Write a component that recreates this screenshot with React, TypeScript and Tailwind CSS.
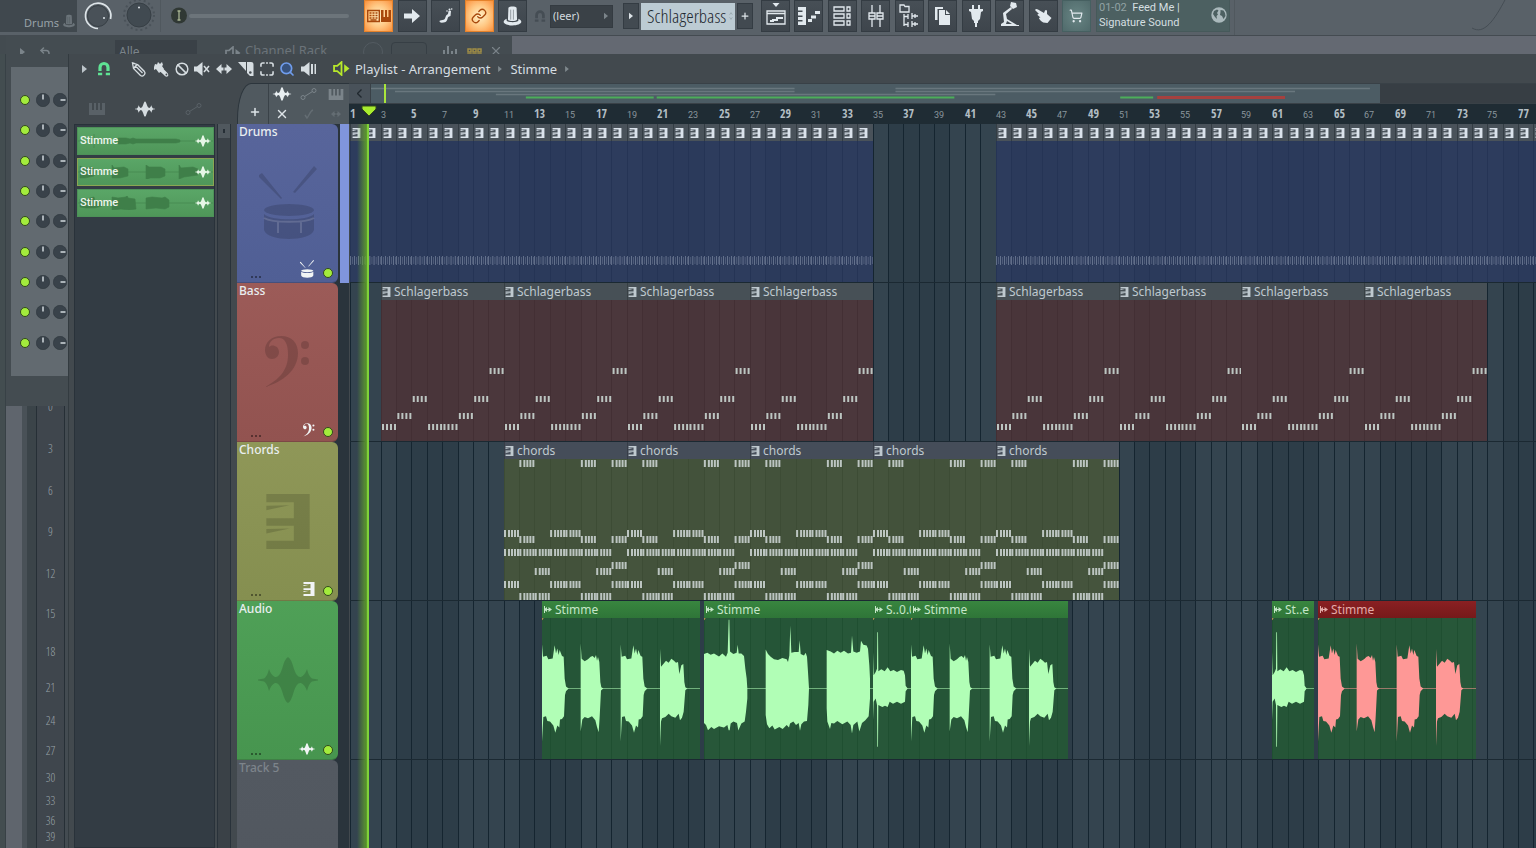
import type { ReactNode } from "react";
import { ShoppingCart, Link, Ban, Search, Undo2, Plus, X } from "lucide-react";
import clsx from "clsx";

const BAR = 15.37;
const TOTAL_BARS = 130;

const barX = (bar: number) => Math.round((bar - 1) * BAR);
const range = (from: number, to: number) =>
  Array.from({ length: to - from }, (_, i) => from + i);

/* ---------- icons ---------- */

type IconProps = { className?: string };

const KeysIcon = ({ className }: IconProps) => (
  <svg viewBox="0 0 26 33" className={className} fill="currentColor">
    <path d="M0 0h26v33H0v-5h16.500V19H0v-4.500h16.500V5H0z" />
    <path d="M0 7l14-.3L0 9.700zM0 21l14-.3L0 23.700z" />
  </svg>
);

const WaveIcon = ({ className }: IconProps) => (
  <svg viewBox="0 0 60 46" className={className} fill="currentColor">
    <path d="M0 22.500L6 21.500Q9 20 11 12Q13 18 17 20Q21 21 24 12Q27 1 30 0Q33 1 36 12Q39 21 43 20Q47 18 49 12Q51 20 54 21.500L60 22.500V23.500L54 24.500Q51 26 49 34Q47 28 43 26Q39 25 36 34Q33 45 30 46Q27 45 24 34Q21 25 17 26Q13 28 11 34Q9 26 6 24.500L0 23.500z" />
  </svg>
);

const DrumIcon = ({ className }: IconProps) => (
  <svg viewBox="0 0 60 74" className={className} fill="currentColor">
    <path d="M1 9l3-2 20 25-1 1L1 11zM56 0l3 3-22 24-2-1z" />
    <ellipse cx="31" cy="44" rx="25" ry="6" />
    <path d="M6 48c6 7 44 7 50 0v16c-3 12-47 12-50 0z" />
    <path
      d="M20 55v12M43 55v12M6 52c8 5 42 5 50 0"
      stroke="#fff"
      strokeOpacity=".15"
      strokeWidth="2"
      fill="none"
    />
  </svg>
);

const BassClefIcon = ({ className }: IconProps) => (
  <svg viewBox="0 0 46 52" className={className} fill="currentColor">
    <path d="M0 51c13-7 23-16 23-32C23 8 20 2 14 2 8 2 4 6 4 11c2-3 10-2 10 5 0 4-3 7-7 7-5 0-7-5-7-9C0 6 7 0 16 0c11 0 17 7 17 17C33 34 18 46 0 51z" />
    <circle cx="40" cy="9" r="4" />
    <circle cx="40" cy="25" r="4" />
  </svg>
);

const KeyboardIcon = ({ className }: IconProps) => (
  <svg viewBox="0 0 16 12" className={className} fill="currentColor">
    <path d="M0 0h3v7h2V0h2v7h2V0h2v7h2V0h3v12H0z" />
  </svg>
);

const AutomationIcon = ({ className }: IconProps) => (
  <svg viewBox="0 0 17 13" className={className} fill="none" stroke="currentColor">
    <circle cx="3" cy="10" r="2" />
    <circle cx="14" cy="3" r="2" />
    <path d="M4.500 9l8-5" />
  </svg>
);

const TriRight = ({ className }: IconProps) => (
  <svg viewBox="0 0 5 8" className={className} fill="currentColor">
    <path d="M0 0l5 4-5 4z" />
  </svg>
);

const MagnetIcon = ({ className }: IconProps) => (
  <svg viewBox="0 0 14 15" className={className} fill="none" stroke="currentColor">
    <path d="M3 10V6.500a4 4 0 0 1 8 0V10" strokeWidth="3.200" />
    <path d="M1 13h4.200M8.800 13H13" strokeWidth="2.600" />
  </svg>
);

const PencilIcon = () => (
  <svg viewBox="0 0 16 16" className="size-4" fill="none" stroke="currentColor" strokeWidth="1.300">
    <path d="M1.500 2L2.500 7.500l7 7c1 .8 2.500.6 3.500-.4s1.200-2.500.4-3.500l-7-7zM4.500 5l7 7M6.500 3.500l7 7M2.500 7.500l2-2.500 2-1.500M1.500 2l2 .5" />
  </svg>
);

const BrushIcon = () => (
  <svg viewBox="0 0 16 16" className="size-4" fill="currentColor">
    <path d="M1 6l1-3 2 .5L5 1l2 2 2-2 1 3-1 1 2 3-5 4-3-4-2 1z" />
    <path d="M9 6.500l4.500 4.500c2 1.500 2.500 4 1 4.500s-3-.5-4-2L6.500 10z" />
    <circle cx="13.400" cy="13.500" r=".9" fill="#42494e" />
  </svg>
);

const MuteIcon = () => (
  <svg viewBox="0 0 16 14" className="h-3.5 w-4" fill="currentColor">
    <path d="M0 4.500h3L8.500 0v14L3 9.500H0z" />
    <path d="M10 4l5 6M15 4l-5 6" stroke="currentColor" strokeWidth="1.500" />
  </svg>
);

const SlipIcon = ({ className }: IconProps) => (
  <svg viewBox="0 0 16 12" className={className} fill="currentColor">
    <path d="M0 6l5.500-5v3.500h5V1L16 6l-5.500 5V7.500h-5V11z" />
    <path d="M8 3v6" stroke="#42494e" />
  </svg>
);

const SliceIcon = () => (
  <svg viewBox="0 0 16 16" className="size-4" fill="currentColor">
    <path d="M0 1h8v9z" />
    <path d="M9 1h4c2 0 2.500 1 2.500 3v11H12L9 12z" />
    <circle cx="12.300" cy="11.500" r="1.300" fill="#42494e" />
  </svg>
);

const SelectIcon = () => (
  <svg viewBox="0 0 15 15" className="size-3.5" fill="none" stroke="currentColor" strokeWidth="1.700">
    <path d="M1 5V3q0-2 2-2h2M10 1h2q2 0 2 2v2M14 10v2q0 2-2 2h-2M5 14H3q-2 0-2-2v-2M6.500 1h2M6.500 14h2" />
  </svg>
);

const PlaybackIcon = () => (
  <svg viewBox="0 0 16 14" className="h-3.5 w-4" fill="currentColor">
    <path d="M0 4.500h3L8.500 0v14L3 9.500H0zM10 2h2v10h-2zM13.500 2h1.500v10h-1.500z" />
  </svg>
);

const SpeakerOutline = ({ className }: IconProps) => (
  <svg viewBox="0 0 16 14" className={className} fill="none" stroke="currentColor" strokeWidth="1.700">
    <path d="M1 4.500h3L8 1v12L4 9.500H1z" />
    <path d="M10.500 3L15.500 7l-5 4z" fill="currentColor" stroke="none" />
  </svg>
);

const HatIcon = ({ className }: IconProps) => (
  <svg viewBox="0 0 20 22" className={className} fill="currentColor">
    <path d="M5.500 2c1-2 8-2 9 0l.5 13c-1 2-9 2-10 0z" />
    <path d="M3.500 14C-4 18 3 21.500 10 21.500S24 18 16.500 14v2c-1 2.500-12 2.500-13 0z" />
    <path d="M8 4v11M11 4v11" stroke="#3c444b" strokeOpacity=".5" />
  </svg>
);

/* ---------- top toolbar ---------- */

const ToolButton = ({
  label,
  children,
  tone = "dark",
}: {
  label: string;
  children: ReactNode;
  tone?: "dark" | "orange" | "teal";
}) => (
  <button
    aria-label={label}
    className={clsx(
      "flex h-8 w-[29px] shrink-0 items-center justify-center border",
      tone === "dark" && "border-[#343c43] bg-linear-to-b from-[#474f56] to-[#3e454c] text-[#e2e9ee]",
      tone === "orange" &&
        "border-[#e5822b] bg-radial from-[#fff0c8] via-[#ffc985] to-[#fa9038] text-[#a8480c]",
      tone === "teal" && "border-[#466061] bg-radial from-[#688584] to-[#506a6b] text-[#e2e9ee]",
    )}
  >
    {children}
  </button>
);

const LEFT_TOOLS: { label: string; tone?: "dark" | "orange"; icon: ReactNode }[] = [
  {
    label: "Typing keyboard",
    tone: "orange",
    icon: (
      <svg viewBox="0 0 24 14" className="h-3.5 w-6" fill="none" stroke="currentColor">
        <path d="M.7 1.500h11.600v11H.7z" strokeWidth="1.400" />
        <path
          d="M2.500 4h2M5.500 4h2M8.500 4h2M2.500 6.500h2M5.500 6.500h2M8.500 6.500h2M2.500 9h2M5.500 9h2M8.500 9h2M3.500 11h6"
          strokeWidth="1.400"
        />
        <path d="M14 1h2.500v7H18V1h2v7h1.500V1H24v12H14z" fill="currentColor" stroke="none" />
      </svg>
    ),
  },
  {
    label: "Step edit",
    icon: (
      <svg viewBox="0 0 16 14" className="h-3.5 w-4" fill="currentColor">
        <path d="M0 4.500h8V0l8 7-8 7V9.500H0z" />
      </svg>
    ),
  },
  {
    label: "Note glide",
    icon: (
      <svg viewBox="0 0 16 16" className="size-4" fill="currentColor">
        <path d="M10.500 3q1-1 2.500 0l-.5 5q-3 .5-3 3-1 3.500-4 3.500-4 .5-4-1t3-1.500q2.500 0 3-3 .5-2 2.500-3z" />
        <circle cx="11.500" cy="1.500" r="1" />
        <circle cx="13.700" cy="1" r=".8" />
        <circle cx="9" cy="3" r=".8" />
      </svg>
    ),
  },
  { label: "Link", tone: "orange", icon: <Link className="size-4" strokeWidth={2} /> },
  { label: "Metronome hat", icon: <HatIcon className="h-5 w-[19px]" /> },
];

const RIGHT_TOOLS: { label: string; tone?: "dark" | "teal"; icon: ReactNode }[] = [
  {
    label: "View playlist",
    icon: (
      <svg viewBox="0 0 20 24" className="mb-1 h-6 w-5" fill="none" stroke="currentColor" strokeWidth="1.300">
        <path d="M1 9h18v13H1zM1 11.500h18" />
        <path d="M4 19h3v-1h4v-2h6" strokeWidth="2" />
        <path d="M6.500 1h7L10 5z" fill="currentColor" stroke="none" />
      </svg>
    ),
  },
  {
    label: "View piano roll",
    icon: (
      <svg viewBox="0 0 22 18" className="h-[18px] w-[22px]" fill="currentColor">
        <path d="M0 0h8v18H0v-3.500h4.500V13H0v-3h4.500V8.500H0V5h4.500V3.500H0z" />
        <path d="M10 12h4v3h-4zM13 8.500h5v3h-5zM17 4h5v3h-5z" />
      </svg>
    ),
  },
  {
    label: "View channel rack",
    icon: (
      <svg viewBox="0 0 18 20" className="h-5 w-[18px]" fill="none" stroke="currentColor" strokeWidth="1.300">
        <path d="M1 1h10v4H1zM1 8h10v4H1zM1 15h10v4H1zM14 1h3v4h-3zM14 8h3v4h-3zM14 15h3v4h-3z" />
      </svg>
    ),
  },
  {
    label: "View mixer",
    icon: (
      <svg viewBox="0 0 16 22" className="h-[22px] w-4" fill="none" stroke="currentColor" strokeWidth="1.300">
        <path d="M4 0v8M4 14v8M12 0v8M12 14v8M1 8h6v6H1zM9 8h6v6H9zM1 11h6M9 11h6" />
      </svg>
    ),
  },
  {
    label: "View browser",
    icon: (
      <svg viewBox="0 0 20 24" className="h-6 w-5" fill="none" stroke="currentColor" strokeWidth="1.300">
        <path d="M1 1h4l1 1.500h4V8H1zM5 10v12M5 12.500h4M5 20.500h4M13 9v6M13 17v6M13 12h6M13 20h6" />
        <path d="M9 10v5M9 18v5M16 10v4M16 18v4" />
      </svg>
    ),
  },
  {
    label: "Project files",
    icon: (
      <svg viewBox="0 0 15 18" className="h-[18px] w-[15px]" fill="currentColor">
        <path d="M0 0h8v2H2.500v11H0z" />
        <path d="M4 3h6v5h5v10H4zM11 3l4 4h-4z" />
      </svg>
    ),
  },
  {
    label: "Plugins",
    icon: (
      <svg viewBox="0 0 14 22" className="h-[22px] w-3.5" fill="currentColor">
        <path d="M3 0h2v4H3zM9 0h2v4H9zM0 4h14v2l-2 1-1 7-2 2v2H8v4H6v-4H5v-2l-2-2-1-7-2-1z" />
      </svg>
    ),
  },
  {
    label: "Touch controller",
    icon: (
      <svg viewBox="0 0 18 24" className="mb-1 h-6 w-[18px]" fill="currentColor">
        <path d="M10 0l5 1 1 4-4 2-3-3zM10 5l1 2-6 5 1 5 10 6h2v1H0v-2l3-2-1-9z" />
        <path d="M6 19l5 3H5z" fill="#434b52" />
      </svg>
    ),
  },
  {
    label: "Multi-touch",
    icon: (
      <svg viewBox="0 0 17 14" className="h-3.5 w-[17px]" fill="currentColor">
        <path d="M0 1q1-1.500 3-.5l6 3.500 1-2.500q1.500-1 2 .5v3l4.500 4-4 5q-5 0-7-2.500L4 9.500q0-1.500 1.500-1L2.500 6q0-1.500 1.500-1z" />
      </svg>
    ),
  },
  { label: "Shop", tone: "teal", icon: <ShoppingCart className="size-3.5" strokeWidth={2} /> },
];

const Toolbar = () => (
  <header className="flex h-9 shrink-0 items-start border-b border-[#444b51] bg-[#596168]">
    <div className="flex h-8 w-[77px] shrink-0 items-end justify-end gap-1 bg-[#40484e] pr-0.5 pb-px">
      <span className="font-['Noto_Sans',sans-serif] text-[11px] leading-4 text-[#98a2a8]">Drums</span>
      <HatIcon className="mb-0.5 h-4 w-3 text-[#6b747a]" />
    </div>
    <div className="flex w-[83px] shrink-0 justify-around">
      <button aria-label="Main volume" className="size-8">
        <svg viewBox="0 0 32 32">
          <circle cx="16" cy="16" r="10.500" fill="#495158" stroke="#373f45" />
          <path d="M16 28.500A12.700 12.700 0 1 1 28.500 19" fill="none" stroke="#dde4e8" strokeWidth="1.700" />
          <circle cx="22" cy="18" r="1" fill="#dde4e8" />
        </svg>
      </button>
      <button aria-label="Main pitch" className="size-8">
        <svg viewBox="0 0 32 32">
          <circle cx="16" cy="15" r="15" fill="none" stroke="#4a5259" strokeWidth="2" strokeDasharray="2 3" />
          <circle cx="16" cy="15" r="12" fill="#414a51" stroke="#373f45" />
          <circle cx="16" cy="7.500" r="1" fill="#dde4e8" />
        </svg>
      </button>
    </div>
    <div className="flex h-8 w-[204px] shrink-0 items-center border-l border-[#50585e] pl-2.5">
      <svg viewBox="0 0 16 18" className="h-[18px] w-4">
        <circle cx="8" cy="8.500" r="8" fill="#303834" />
        <path d="M6.500 4h3M8 4v9M6.500 13h3" stroke="#a8b493" strokeWidth="1.300" />
      </svg>
      <div className="ml-0.5 h-1 w-[160px] rounded-sm bg-[#6c747a]" />
    </div>
    <div className="flex w-[163px] shrink-0 justify-between">
      {LEFT_TOOLS.map((tool) => (
        <ToolButton key={tool.label} label={tool.label} tone={tool.tone}>
          {tool.icon}
        </ToolButton>
      ))}
    </div>
    <div className="flex h-8 shrink-0 items-center">
      <MagnetIcon className="ml-[7px] mr-1 h-3.5 w-3 text-[#454d54]" />
      <div className="flex h-[23px] w-[63px] items-center justify-between border border-[#343b41] bg-[#3a4147] pr-1 pl-0.5">
        <select
          aria-label="Snap"
          className="w-12 appearance-none bg-transparent font-['Noto_Sans',sans-serif] text-[11px] leading-4 text-[#d3dade]"
        >
          <option>(leer)</option>
        </select>
        <TriRight className="h-2 w-1 text-[#7b848a]" />
      </div>
      <button
        aria-label="Pattern menu"
        className="ml-2.5 flex h-[26px] w-4 items-center justify-center border border-[#343c43] bg-[#424a51] text-[#dde4e8]"
      >
        <TriRight className="h-2 w-1" />
      </button>
      <div className="ml-0.5 flex h-[27px] w-[94px] items-center justify-between bg-[#bccbd3] pr-0.5 pl-1.5">
        <select
          aria-label="Pattern"
          className="w-[82px] appearance-none bg-transparent font-['Open_Sans_Condensed_Light','Open_Sans_Condensed',Roboto,sans-serif] text-[19px] leading-[26px] font-light text-[#1d282f]"
        >
          <option>Schlagerbass</option>
        </select>
        <svg viewBox="0 0 6 12" className="h-3 w-1 shrink-0" fill="none" stroke="#8d9ba3">
          <path d="M1 4l2-3 2 3M1 8l2 3 2-3" />
        </svg>
      </div>
      <button
        aria-label="Add pattern"
        className="ml-0.5 flex h-[26px] w-4 items-center justify-center border border-[#343c43] bg-[#424a51] text-[#dde4e8]"
      >
        <Plus className="size-2.5" strokeWidth={3} />
      </button>
    </div>
    <div className="ml-2 flex w-[330px] shrink-0 justify-between">
      {RIGHT_TOOLS.map((tool) => (
        <ToolButton key={tool.label} label={tool.label} tone={tool.tone}>
          {tool.icon}
        </ToolButton>
      ))}
    </div>
    <div className="ml-[5px] flex h-8 w-[134px] shrink-0 items-center justify-between border border-t-0 border-[#46595a] bg-[#4c6061] pr-0.5 pb-0.5 pl-0.5">
      <p className="font-[Roboto,sans-serif] text-[11px] leading-[15px] text-[#d5dfe0]">
        <span className="text-[#91a2a3]">01-02</span> &nbsp;Feed Me |
        <br />
        Signature Sound
      </p>
      <svg viewBox="0 0 16 16" className="size-4">
        <circle cx="8" cy="8" r="7.700" fill="#aab9bc" />
        <path
          d="M3 4l3-1.500 1.500 1L6 6l1 1.500L5.500 9 6 12l-2-2-2-3zM9.500 3l3 .5L14 6l.5 3-2 3-1.500-3-2-1 .5-3z"
          fill="#4c6061"
        />
      </svg>
    </div>
    <div className="ml-1 flex h-full min-w-0 flex-1 justify-end border-l border-[#50585e] pr-6">
      <svg viewBox="0 0 40 32" className="h-8 w-10 shrink-0" fill="none" stroke="#454d54">
        <path d="M0 28c12 7 22-7 34-30" />
      </svg>
    </div>
  </header>
);

/* ---------- windows behind the playlist ---------- */

const ChannelRackTitle = () => (
  <div className="flex h-[18px] shrink-0 bg-[#646972]">
    <div className="flex w-[512px] shrink-0 items-start overflow-hidden border-l-[6px] border-[#434b50] bg-[#444c51] pt-1 text-[#7b848a]">
      <TriRight className="mt-2 ml-[14px] h-2 w-[5px] shrink-0" />
      <Undo2 className="mt-1.5 ml-3.5 size-3 shrink-0" strokeWidth={3} />
      <select
        aria-label="Channel filter"
        className="ml-[64px] h-6 w-[82px] shrink-0 appearance-none bg-[#3a4147] px-1 font-['Noto_Sans',sans-serif] text-xs text-[#7b848a]"
      >
        <option>Alle</option>
      </select>
      <SpeakerOutline className="mt-1.5 ml-7 h-3.5 w-4 shrink-0" />
      <span className="ml-1 font-['Noto_Sans',sans-serif] text-[13px] leading-5 whitespace-nowrap text-[#6b7379]">
        Channel Rack
      </span>
      <div className="mt-0.5 ml-9 size-5 shrink-0 rounded-full border border-[#535b61]" />
      <div className="mt-0.5 ml-2 h-5 w-9 shrink-0 rounded-sm border border-[#373f45]" />
      <svg viewBox="0 0 14 10" className="mt-1.5 ml-4 h-2.5 w-3.5 shrink-0" stroke="currentColor" strokeWidth="2">
        <path d="M1 4v6M5 0v10M9 5v5M13 3v7" />
      </svg>
      <svg viewBox="0 0 16 10" className="mt-2 ml-2.5 h-2.5 w-4 shrink-0" fill="none" stroke="#a08d45" strokeWidth="1.500">
        <path d="M1 1h3v3H1zM6 1h3v3H6zM11 1h3v3h-3zM1 6h3v3H1zM6 6h3v3H6zM11 6h3v3h-3z" />
      </svg>
      <X className="mt-1 ml-1.5 size-3.5 shrink-0" />
    </div>
  </div>
);

const Led = () => (
  <span className="block size-2.5 rounded-full border border-[#32491d] bg-[#a3ec3c]" />
);

const Knob = ({ angled, label }: { angled?: boolean; label: string }) => (
  <button aria-label={label} className="size-[14px] shrink-0">
    <svg viewBox="0 0 14 14">
      <circle cx="7" cy="7" r="6.700" fill="#39424a" stroke="#2e363d" strokeWidth=".6" />
      <path d={angled ? "M7.500 7h5" : "M7 1.500v5"} stroke="#dde4e8" strokeWidth="1.400" />
    </svg>
  </button>
);

const METER_MARKS = [
  { label: "0", step: 6 },
  { label: "3", step: 42 },
  { label: "6", step: 42 },
  { label: "9", step: 41 },
  { label: "12", step: 42 },
  { label: "15", step: 40 },
  { label: "18", step: 38 },
  { label: "21", step: 36 },
  { label: "24", step: 33 },
  { label: "27", step: 30 },
  { label: "30", step: 27 },
  { label: "33", step: 23 },
  { label: "36", step: 20 },
  { label: "39", step: 16 },
];

const BackgroundColumn = () => (
  <div className="flex w-[68px] shrink-0">
    <div className="w-1.5 shrink-0 border-r border-[#384146] bg-[#434d50]" />
    <div className="flex min-w-0 flex-1 flex-col">
      <div className="flex h-[352px] shrink-0 flex-col bg-[#444c51] pt-[13px] pl-[5px]">
        <div className="h-[309px] bg-[#626a70] pt-[18px]">
          <div className="grid h-[273px] grid-rows-9">
            {range(1, 10).map((ch) => (
              <div key={ch} className="flex items-center overflow-hidden">
                <button aria-label={`Channel ${ch} on`} className="mr-1.5 ml-[9px]">
                  <Led />
                </button>
                <Knob label={`Channel ${ch} pan`} />
                <span className="w-[3px] shrink-0" />
                <Knob angled label={`Channel ${ch} volume`} />
              </div>
            ))}
          </div>
        </div>
      </div>
      <div className="flex min-h-0 flex-1">
        <div className="w-4 bg-[#5f656d]" />
        <div className="w-[5px] bg-[#495157]" />
        <div className="w-2.5 border-r border-[#262f36] bg-[#3b4449]" />
        <div className="w-[27px] overflow-hidden bg-[#3f464d] text-center font-['Open_Sans_Condensed_Light',Roboto,sans-serif] text-[12px] leading-[10px] text-[#98a1a7]">
          {METER_MARKS.map((mark) => (
            <div key={mark.label} className="flex items-end justify-center" style={{ height: mark.step }}>
              {mark.label}
            </div>
          ))}
        </div>
        <div className="min-w-0 flex-1 border-l border-[#262f36] bg-[#434b51]" />
      </div>
    </div>
  </div>
);

/* ---------- playlist window ---------- */

const PlaylistTitle = () => (
  <div className="flex h-[29px] shrink-0 items-center bg-[#42494e] text-[#d6dde1]">
    <button aria-label="Playlist menu" className="ml-[13px]">
      <TriRight className="h-2 w-[5px] text-[#bcc4c9]" />
    </button>
    <button aria-label="Snap to grid" className="ml-2.5">
      <MagnetIcon className="h-[15px] w-3.5 text-[#5fe394]" />
    </button>
    <div className="ml-5 flex w-[186px] shrink-0 items-center justify-between">
      <button aria-label="Draw"><PencilIcon /></button>
      <button aria-label="Paint"><BrushIcon /></button>
      <button aria-label="Delete"><Ban className="size-3.5" strokeWidth={2.5} /></button>
      <button aria-label="Mute"><MuteIcon /></button>
      <button aria-label="Slip"><SlipIcon className="h-3 w-4" /></button>
      <button aria-label="Slice"><SliceIcon /></button>
      <button aria-label="Select"><SelectIcon /></button>
      <button aria-label="Zoom"><Search className="size-4 fill-[#37527c] text-[#6f9cec]" strokeWidth={2.5} /></button>
      <button aria-label="Playback"><PlaybackIcon /></button>
    </div>
    <SpeakerOutline className="ml-4 h-[15px] w-[17px] shrink-0 text-[#b7e82b]" />
    <h1 className="ml-[5px] flex items-center gap-2 font-['Noto_Sans',sans-serif] text-[13px] leading-4 whitespace-nowrap">
      Playlist - Arrangement
      <TriRight className="h-1.5 w-1 text-[#7f888d]" />
      Stimme
      <TriRight className="h-1.5 w-1 text-[#7f888d]" />
    </h1>
  </div>
);

const PICKER_ITEMS = [
  { d: "M0 7h135M16 0v14M40 4h8l4 1 3-1 3 1h40l4 1v2l-4 1H58l-3 1-3-1-4 1h-8z", selected: false },
  { d: "M0 7h135M2 1l4 2 8-1 3 3-1 6-9 2-5 0zM34 0l2 3 10-1 4 2v7l-8 2-8 0zM68 0l3 2h12l4 2v7l-5 2-10 0-4 2zM101 0l2 3 12-1 5 2v6l-14 2-5 2z", selected: true },
  { d: "M0 7h135M2 3h6l8-2 1 4 7 1v4l-7 2-9 0-6-1zM34 1l6 1 8-1 1-2 1 3 7 1 1 10-7 1-8-1-9 1zM68 2l6-1 10 1 3-1 4 3v7l-4 2-9-1-10 1z", selected: false },
];

const Picker = () => (
  <aside className="flex w-[168px] shrink-0 flex-col bg-[#42494e] pl-[5px]">
    <div className="flex h-[41px] shrink-0 items-center justify-around pt-2.5 pr-5 text-[#596167]">
      <button aria-label="Patterns"><KeyboardIcon className="h-3 w-4" /></button>
      <button aria-label="Audio clips" className="text-[#d6dde1]"><WaveIcon className="h-4 w-5" /></button>
      <button aria-label="Automation clips"><AutomationIcon className="h-3.5 w-[17px]" /></button>
    </div>
    <div className="flex min-h-0 flex-1">
      <ul className="flex w-[141px] flex-col gap-[3px] border border-[#29323a] bg-[#333c44] pt-0.5 pl-0.5">
        {PICKER_ITEMS.map((item, i) => (
          <li
            key={i}
            className={clsx(
              "relative flex h-7 w-[137px] items-center justify-between border px-0.5",
              "bg-linear-to-b from-[#5aa667] to-[#4f9659]",
              item.selected ? "border-[#8ba552]" : "border-[#4d9158]",
            )}
          >
            <svg
              viewBox="0 0 135 14"
              className="absolute inset-x-0 top-[6px] h-3.5 w-full text-[#3f7f49]"
              fill="currentColor"
              stroke="currentColor"
              strokeWidth=".6"
            >
              <path d={item.d} />
            </svg>
            <span className="relative font-[Roboto,sans-serif] text-[11px] leading-4 font-medium text-[#eef6ee]">
              Stimme
            </span>
            <WaveIcon className="relative h-3 w-4 text-[#e6f6e6]" />
          </li>
        ))}
      </ul>
      <div className="ml-0.5 w-[14px] border-r border-l border-[#29323a] bg-[#3a4147]">
        <div className="flex h-[14px] items-center justify-center bg-[#50585e]">
          <div className="h-1 w-0.5 bg-[#262f36]" />
        </div>
      </div>
    </div>
  </aside>
);

type Clip = {
  name: string;
  left: number;
  width: number;
  muted?: boolean;
  wave?: string;
};

type Track = {
  name: string;
  kind: "drums" | "bass" | "chords" | "audio" | "empty";
};

const TRACKS: Track[] = [
  { name: "Drums", kind: "drums" },
  { name: "Bass", kind: "bass" },
  { name: "Chords", kind: "chords" },
  { name: "Audio", kind: "audio" },
  { name: "Track 5", kind: "empty" },
];

const TrackHeader = ({ track }: { track: Track }) => {
  const { kind, name } = track;
  return (
    <div className={clsx("flex w-28 shrink-0 bg-[#2a343c]", kind === "empty" ? "h-full" : "h-[159px]")}>
      <div
        className={clsx(
          "relative flex w-[101px] flex-col justify-between rounded-r-md border-b border-black/20 pr-[5px] pb-1 pl-0.5",
          kind === "drums" && "bg-linear-to-b from-[#58659b] to-[#505f95]",
          kind === "bass" && "bg-linear-to-b from-[#9c5b58] to-[#925350]",
          kind === "chords" && "bg-linear-to-b from-[#8f9758] to-[#858f50]",
          kind === "audio" && "bg-linear-to-b from-[#4fa057] to-[#47954f]",
          kind === "empty" && "bg-linear-to-b from-[#535961] to-[#484e56]",
        )}
      >
        <span
          className={clsx(
            "h-6 font-['Noto_Sans',sans-serif] text-xs leading-4 font-medium",
            kind === "empty" ? "text-[#7d848b]" : "text-[#e9eef0]",
          )}
        >
          {name}
        </span>
        {kind !== "empty" && (
          <>
            <div className="flex h-[76px] items-center justify-center pl-1 text-black/15">
              {kind === "drums" && <DrumIcon className="h-[74px] w-[60px]" />}
              {kind === "bass" && <BassClefIcon className="h-[52px] w-[46px]" />}
              {kind === "chords" && <KeysIcon className="h-[55px] w-[44px]" />}
              {kind === "audio" && <WaveIcon className="h-[46px] w-[60px]" />}
            </div>
            <div className="flex h-5 items-end gap-2 text-[#f1f4f5]">
              <span className="mr-auto ml-3 flex gap-0.5 text-black/40">
                <i className="size-0.5 bg-current" />
                <i className="size-0.5 bg-current" />
                <i className="size-0.5 bg-current" />
              </span>
              {kind === "drums" && <DrumIcon className="h-[18px] w-4" />}
              {kind === "bass" && <BassClefIcon className="h-3.5 w-3" />}
              {kind === "chords" && <KeysIcon className="h-3.5 w-3" />}
              {kind === "audio" && <WaveIcon className="h-3 w-4" />}
              <button aria-label={`Mute ${name}`}>
                <Led />
              </button>
            </div>
          </>
        )}
      </div>
      {kind === "drums" && <div className="ml-0.5 w-[9px] bg-[#8095dc]" />}
    </div>
  );
};

/* Burst shapes, three units to the pixel, zero on the centre line */
const BURST_LONG =
  "3,-96 14,-99 19,-88 32,-91 38,-131 42,-106 46,-121 50,-101 53,-116 60,-98 65,-96 68,-30 72,-6 80,0 72,8 69,20 66,84 60,92 54,94 52,118 46,112 40,134 34,112 24,100 16,98 12,84 4,86";
const VOICE_FOUR = `M0,-134 L${BURST_LONG} 0,161z
  M116,-137 L119,-90 128,-82 138,-88 146,-96 152,-98 158,-92 162,-101 165,-84 168,-95 172,-80 175,-20 178,-4 184,0 177,6 173,86 170,132 165,116 160,96 150,84 138,90 128,86 121,94 116,130z
  M236,-134 l3,38 11,-3 5,11 13,-3 6,-40 4,25 4,-15 4,20 3,-15 7,18 5,2 3,66 4,24 8,6 -8,8 -3,12 -3,64 -6,8 -6,2 -2,24 -6,-6 -6,22 -6,-22 -10,-12 -8,-2 -4,-14 -8,2 -4,75z
  M354,-120 L357,-66 364,-74 372,-84 380,-78 388,-90 396,-84 402,-78 408,-80 412,-44 418,-70 424,-74 427,-20 430,-4 436,0 430,5 425,70 420,88 414,96 410,76 400,88 388,84 380,76 370,86 360,90 357,100 354,174z`;
const VOICE_THREE = `M0,-104 L10,-108 20,-102 30,-106 45,-97 55,-106 66,-96 71,-108 74,-208 76,-208 78,-112 88,-104 98,-108 101,-132 104,-106 112,-106 120,-98 124,-60 128,-30 130,0 130,30 126,70 122,100 112,106 103,127 99,104 88,100 80,106 77,126 74,126 70,110 60,118 45,114 30,122 22,116 12,126 6,110 0,104z
  M185,-118 L192,-104 200,-96 210,-88 222,-86 235,-92 248,-88 252,-80 256,-100 259,-190 262,-108 272,-110 284,-110 287,-146 290,-104 300,-100 305,-108 309,-96 312,-50 315,0 313,50 309,98 300,100 292,108 288,128 284,104 276,110 268,100 258,106 255,118 248,110 236,122 226,116 212,124 205,112 196,120 189,108 185,80z
  M368,-116 L380,-112 390,-106 400,-114 410,-108 420,-114 432,-106 441,-108 444,-160 448,-112 458,-108 468,-112 471,-144 478,-132 488,-130 492,-120 496,-70 498,-30 498,30 494,84 484,96 474,104 466,130 460,100 448,110 444,136 440,110 430,100 415,108 400,98 390,106 382,104 378,122 370,100 368,60z`;
const VOICE_SHORT =
  "M0,-110 L2,-40 8,-50 12,-60 13,-170 15,-170 16,-52 25,-58 35,-52 44,-64 52,-52 62,-56 72,-50 84,-56 92,-54 96,-40 98,-8 104,0 98,8 96,40 84,46 72,40 60,46 50,40 44,56 36,52 28,56 16,50 15,176 13,176 12,50 8,30 2,40 0,96z";

const AUDIO_CLIPS: Clip[] = [
  { name: "Stimme", left: 192, width: 158, wave: VOICE_FOUR },
  { name: "Stimme", left: 354, width: 169, wave: VOICE_THREE },
  { name: "S..0.0", left: 523, width: 38, wave: VOICE_SHORT },
  { name: "Stimme", left: 561, width: 157, wave: VOICE_FOUR },
  { name: "St..e", left: 922, width: 42, wave: VOICE_SHORT },
  { name: "Stimme", left: 968, width: 158, wave: VOICE_FOUR, muted: true },
];

const patternClips = (name: string, starts: number[]): Clip[] =>
  starts.map((start) => ({ name, left: barX(start), width: barX(start + 8) - barX(start) }));

const BASS_CLIPS = patternClips("Schlagerbass", [3, 11, 19, 27, 43, 51, 59, 67]);
const CHORD_CLIPS = patternClips("chords", [11, 19, 27, 35, 43]);
const DRUM_BARS = [...range(1, 35), ...range(43, TOTAL_BARS)];

const BASS_ROWS = [
  { y: 68, bars: [7] },
  { y: 96, bars: [2, 6] },
  { y: 113, bars: [1, 5] },
  { y: 124, bars: [0, 3, 4] },
];

const CHORD_ROWS = [
  { y: 1, bars: [1, 5, 7] },
  { y: 71, bars: [0, 3, 4] },
  { y: 77, bars: [1, 5, 7] },
  { y: 90, bars: [0, 1, 2, 3, 4, 5, 6] },
  { y: 103, bars: [7] },
  { y: 109, bars: [2, 6] },
  { y: 122, bars: [0, 3, 4, 7] },
  { y: 134, bars: [1, 2, 5, 6] },
];

const Notes = ({
  rows,
  steps,
  height,
}: {
  rows: { y: number; bars: number[] }[];
  steps: number[];
  height: number;
}) => (
  <svg className="h-[141px] w-full" fill="#bcc5c1">
    {rows.flatMap((row) =>
      row.bars.flatMap((bar) =>
        steps.map((step) => (
          <rect key={`${row.y}-${bar}-${step}`} x={bar * BAR + step} y={row.y} width="2" height={height} />
        )),
      ),
    )}
  </svg>
);

const PatternClip = ({ clip, kind }: { clip: Clip; kind: "bass" | "chords" }) => (
  <div
    className="absolute inset-y-0 flex flex-col overflow-hidden"
    style={{ left: clip.left, width: clip.width }}
  >
    <div
      className={clsx(
        "flex h-[17px] shrink-0 items-center gap-[3px] border-l border-black/20 font-['Noto_Sans',sans-serif] text-xs leading-4 text-[#bfc9cf]",
        kind === "bass" ? "bg-[#475056]" : "bg-[#454d59]",
      )}
    >
      <KeysIcon className="h-2.5 w-[9px] shrink-0" />
      {clip.name}
    </div>
    <div className={clsx("flex-1", kind === "bass" ? "bg-[#533335]/75" : "bg-[#4b5937]/75")}>
      {kind === "bass" ? (
        <Notes rows={BASS_ROWS} steps={[1, 5, 9, 13]} height={6} />
      ) : (
        <Notes rows={CHORD_ROWS} steps={[0, 4, 7, 10, 13]} height={7} />
      )}
    </div>
  </div>
);

const AudioClip = ({ clip }: { clip: Clip }) => (
  <div
    className="absolute inset-y-0 flex flex-col overflow-hidden"
    style={{ left: clip.left, width: clip.width }}
  >
    <div
      className={clsx(
        "flex h-[17px] shrink-0 items-center gap-[3px] overflow-hidden pl-0.5 font-['Noto_Sans',sans-serif] text-xs leading-4",
        clip.muted
          ? "bg-linear-to-b from-[#8a2022] to-[#76191a] text-[#e3aaa8]"
          : "bg-linear-to-b from-[#38863f] to-[#2f7538] text-[#c5e6c8]",
      )}
    >
      <svg viewBox="0 0 8 7" className="h-[7px] w-2 shrink-0" fill="currentColor">
        <path d="M0 0h1v2.500L3 1v2h1.500V1L8 3.500 4.500 6V4H3v2L1 4.500V7H0z" />
      </svg>
      {clip.name}
    </div>
    <div className="flex-1 border-b border-[#1c4a2a] bg-[#235e32]/75">
      <svg
        viewBox={`0 -213 ${clip.width * 3} 426`}
        className={clsx("h-[141px] w-full", clip.muted ? "text-[#fe9896]" : "text-[#b1feb6]")}
        fill="currentColor"
        preserveAspectRatio="none"
      >
        <path d={`M0-1.500H${clip.width * 3}V1.500H0z`} opacity=".55" />
        <path d={clip.wave} />
        <path d="M0-212h5l-5 6z" fill="#e3a257" />
      </svg>
    </div>
  </div>
);

const DrumClip = ({ bar }: { bar: number }) => (
  <div
    className="absolute inset-y-0 flex flex-col"
    style={{ left: barX(bar), width: barX(bar + 1) - barX(bar) }}
  >
    <div className="flex h-[17px] items-center border-l border-[#343d44] bg-[#49525a] pl-px">
      <KeysIcon className="h-2.5 w-[9px] text-[#dbe3ec]" />
    </div>
    <div className="flex-1 bg-[#2b3a61]/75 pt-[115px]">
      <svg viewBox="0 0 15 9" className="h-[9px] w-full" stroke="#9aa5bb" preserveAspectRatio="none">
        <path d="M.5 0v9M4.500 0v9M8.500 0v9M12.500 0v9" strokeOpacity=".5" />
        <path d="M2.500 1v7M6.500 1v7M10.500 1v7M14.500 1v7" strokeOpacity=".3" />
      </svg>
    </div>
  </div>
);

const Lane = ({ track }: { track: Track }) => (
  <div
    className={clsx(
      "relative overflow-hidden",
      track.kind === "empty" ? "flex-1" : "h-[159px] shrink-0 border-b border-[#1b2932]",
    )}
  >
    {track.kind === "drums" && DRUM_BARS.map((bar) => <DrumClip key={bar} bar={bar} />)}
    {track.kind === "bass" && BASS_CLIPS.map((clip) => <PatternClip key={clip.left} clip={clip} kind="bass" />)}
    {track.kind === "chords" && CHORD_CLIPS.map((clip) => <PatternClip key={clip.left} clip={clip} kind="chords" />)}
    {track.kind === "audio" && AUDIO_CLIPS.map((clip) => <AudioClip key={clip.left} clip={clip} />)}
  </div>
);

const Overview = () => (
  <div className="flex h-[21px] shrink-0 border-y border-[#394147] bg-[#373e44]">
    <button
      aria-label="Scroll left"
      className="flex w-[22px] shrink-0 items-center justify-center border-r border-[#394147] bg-[#49525a]"
    >
      <svg viewBox="0 0 5 9" className="h-[9px] w-[5px]" fill="none" stroke="#20282e" strokeWidth="1.300">
        <path d="M4.500.5l-4 4 4 4" />
      </svg>
    </button>
    <div className="w-[85%] bg-[#4c5c64]">
      <svg viewBox="0 0 1010 19" className="h-[19px] w-full" preserveAspectRatio="none">
        <path d="M0 4.500h424M525 4.500h475M24 7.500h400M525 7.500h400M125 10.500h500" stroke="#69777e" strokeWidth="1.500" />
        <path d="M155 13.500h128M286 13.500h298M750 13.500h33" stroke="#4cae5a" strokeWidth="2" />
        <path d="M787 13.500h128" stroke="#a5413f" strokeWidth="3" />
        <path d="M14 0v19" stroke="#a9e53c" strokeWidth="2" />
      </svg>
    </div>
  </div>
);

const Ruler = () => (
  <div className="relative h-5 shrink-0 bg-[#1f2c34]">
    <div className="flex h-full overflow-hidden pl-px">
      {range(0, TOTAL_BARS / 2).map((i) => {
        const bar = i * 2 + 1;
        const major = bar % 4 === 1;
        return (
          <span
            key={bar}
            className={clsx(
              "shrink-0 leading-5",
              major
                ? "font-['Open_Sans_Condensed',Roboto,sans-serif] text-xs font-medium text-[#b3bec4]"
                : "pt-px font-[Roboto,sans-serif] text-[9px] text-[#8a969d]",
            )}
            style={{ width: barX(bar + 2) - barX(bar) }}
          >
            {bar}
          </span>
        );
      })}
    </div>
    <svg viewBox="0 0 16 12" className="absolute top-px left-3 h-3 w-4" fill="#a8ec2f" stroke="#33481a">
      <path d="M1 1h14v3L8 11 1 4z" />
    </svg>
  </div>
);

const Arrangement = () => (
  <section className="flex min-w-0 flex-1 flex-col">
    <div className="flex h-[41px] shrink-0">
      <div className="flex w-28 shrink-0 rounded-tl-[14px_36px] border-t border-l border-[#2c353c] bg-[#50595f] text-[#dde4e8]">
        <button aria-label="Add track" className="flex w-[31px] items-end justify-center border-r border-[#3a4248] pb-1.5 pl-1">
          <Plus className="size-3" strokeWidth={3} />
        </button>
        <div className="grid flex-1 grid-cols-3 items-center justify-items-center text-[#7b848a]">
          <button aria-label="Show audio" className="text-[#e8eef1]"><WaveIcon className="h-3.5 w-5" /></button>
          <button aria-label="Show automation"><AutomationIcon className="h-3.5 w-[17px]" /></button>
          <button aria-label="Show patterns"><KeyboardIcon className="h-[11px] w-4" /></button>
          <button aria-label="Close" className="text-[#dde4e8]"><X className="size-3.5" strokeWidth={2.5} /></button>
          <button aria-label="Curve" className="text-[#646d73]">
            <svg viewBox="0 0 10 10" className="size-2.5" fill="none" stroke="currentColor" strokeWidth="1.500">
              <path d="M1 6l2 3C5 7 6 2 9 1" />
            </svg>
          </button>
          <button aria-label="Stretch" className="text-[#646d73]"><SlipIcon className="h-2 w-2.5" /></button>
        </div>
      </div>
      <div className="flex min-w-0 flex-1 flex-col">
        <Overview />
        <Ruler />
      </div>
    </div>
    <div className="flex min-h-0 flex-1 overflow-hidden">
      <div className="flex w-[113px] shrink-0 flex-col">
        {TRACKS.map((track) => (
          <TrackHeader key={track.name} track={track} />
        ))}
      </div>
      <div className="relative min-w-0 flex-1 overflow-hidden bg-[#2e3e49]">
        <div className="absolute inset-0 flex">
          {range(1, TOTAL_BARS).map((bar) => (
            <div
              key={bar}
              className={clsx(
                "h-full shrink-0 border-l border-[#152530]",
                bar % 8 < 4 ? "bg-[#34444f]" : "bg-[#2d3d48]",
              )}
              style={{ width: barX(bar + 1) - barX(bar) }}
            />
          ))}
        </div>
        <div className="relative flex h-full flex-col">
          {TRACKS.map((track) => (
            <Lane key={track.name} track={track} />
          ))}
        </div>
        {/* Playhead */}
        <div className="absolute inset-y-0 left-[7px] w-3 border-r-2 border-[#7fd23a] bg-linear-to-r from-[#5f9c2d]/0 to-[#5f9c2d]" />
      </div>
    </div>
  </section>
);

const App = () => (
  <main className="flex h-screen flex-col overflow-hidden bg-[#42494e]">
    <Toolbar />
    <ChannelRackTitle />
    <div className="flex min-h-0 flex-1">
      <BackgroundColumn />
      <div className="flex min-w-0 flex-1 flex-col border-l border-[#333b40]">
        <PlaylistTitle />
        <div className="flex min-h-0 flex-1">
          <Picker />
          <Arrangement />
        </div>
      </div>
    </div>
  </main>
);

export default App;
